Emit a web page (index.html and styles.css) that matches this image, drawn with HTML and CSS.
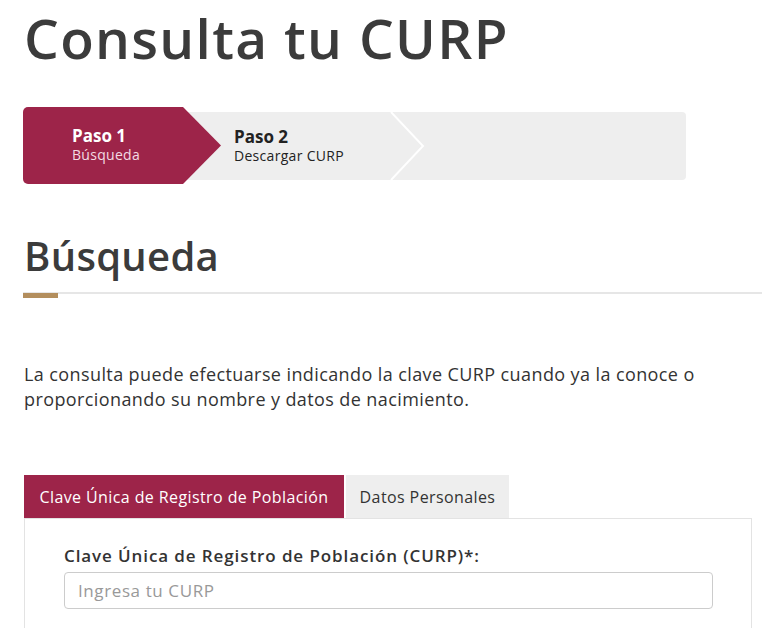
FILE: index.html
```html
<!DOCTYPE html>
<html lang="es">
<head>
<meta charset="utf-8">
<title>Consulta tu CURP</title>
<link rel="stylesheet" href="styles.css">
</head>
<body>
<main class="page">
  <h1 class="title">Consulta tu CURP</h1>

  <div class="steps">
    <div class="step step-active">
      <div class="step-name">Paso 1</div>
      <div class="step-desc">Búsqueda</div>
    </div>
    <div class="step-track">
      <div class="step step-next">
        <div class="step-name">Paso 2</div>
        <div class="step-desc">Descargar CURP</div>
      </div>
      <svg class="chevron" width="36" height="68" viewBox="0 0 36 68" aria-hidden="true">
        <polyline points="1,0 33,34 1,68" fill="none" stroke="#ffffff" stroke-width="2"/>
      </svg>
    </div>
  </div>

  <h2 class="section-title">Búsqueda</h2>
  <div class="rule"><span class="rule-accent"></span></div>

  <p class="intro">La consulta puede efectuarse indicando la clave CURP cuando ya la conoce o proporcionando su nombre y datos de nacimiento.</p>

  <div class="tabs">
    <div class="tab tab-active">Clave Única de Registro de Población</div>
    <div class="tab tab-idle">Datos Personales</div>
  </div>
  <div class="panel">
    <label class="field-label" for="curp">Clave Única de Registro de Población (CURP)*:</label>
    <input class="field-input" id="curp" type="text" placeholder="Ingresa tu CURP">
  </div>
</main>
</body>
</html>
```

FILE: styles.css
```css
* { box-sizing: border-box; }

html, body {
  margin: 0;
  padding: 0;
  background: #ffffff;
}

body {
  font-family: "Open Sans", "Liberation Sans", sans-serif;
  color: #333333;
  overflow: hidden;
}

.page {
  padding: 0 0 0 24px;
}

.title {
  margin: 0;
  font-size: 55px;
  line-height: 75px;
  font-weight: 600;
  color: #3b3b3b;
  letter-spacing: 1.3px;
}

.steps {
  display: flex;
  align-items: center;
  margin-top: 32px;
  margin-left: -1px;
  width: 663px;
  height: 77px;
}

.step-active {
  position: relative;
  z-index: 1;
  flex: 0 0 198px;
  height: 77px;
  background: #9d2449;
  border-radius: 5px 0 0 5px;
  clip-path: polygon(0 0, 160px 0, 100% 50%, 160px 100%, 0 100%);
  padding: 19px 0 0 49px;
  color: #ffffff;
}

.step-track {
  flex: 1;
  display: flex;
  align-items: center;
  height: 68px;
  margin-left: -38px;
  padding-left: 51px;
  background: #eeeeee;
  border-radius: 0 4px 4px 0;
}

.step-next {
  width: 156px;
  color: #222222;
}

.step-name {
  font-size: 17px;
  line-height: 20px;
  font-weight: 700;
}

.step-desc {
  font-size: 14px;
  line-height: 18px;
  letter-spacing: 0.3px;
}

.step-active .step-desc {
  color: #f3dbe3;
}

.chevron {
  display: block;
  flex: 0 0 36px;
}

.section-title {
  margin: 46px 0 0;
  font-size: 40px;
  line-height: 52px;
  font-weight: 600;
  color: #3b3b3b;
  letter-spacing: 0.3px;
}

.rule {
  margin-top: 10px;
  margin-left: -1px;
  height: 2px;
  background: #e6e6e6;
}

.rule-accent {
  display: block;
  width: 35px;
  height: 5px;
  background: #b38e5d;
  position: relative;
  top: 1px;
}

.intro {
  margin: 68px 0 0;
  width: 700px;
  font-size: 18px;
  line-height: 25px;
  letter-spacing: 0.4px;
  color: #333333;
}

.tabs {
  display: flex;
  gap: 2px;
  margin-top: 63px;
}

.tab {
  height: 43px;
  display: flex;
  align-items: center;
  justify-content: center;
  font-size: 16px;
  letter-spacing: 0.4px;
  background: #eeeeee;
  color: #333333;
}

.tab-active {
  width: 320px;
  background: #9d2449;
  color: #ffffff;
}

.tab-idle {
  width: 163px;
}

.panel {
  width: 728px;
  height: 140px;
  border: 1px solid #e3e3e3;
  border-bottom: none;
  padding: 26px 39px 0 39px;
}

.field-label {
  display: block;
  font-size: 17px;
  line-height: 22px;
  font-weight: 600;
  letter-spacing: 0.9px;
  color: #333333;
}

.field-input {
  display: block;
  margin-top: 5px;
  width: 649px;
  height: 37px;
  border: 1px solid #cccccc;
  border-radius: 4px;
  padding: 0 13px;
  font-family: inherit;
  font-size: 17px;
  letter-spacing: 0.6px;
  color: #333333;
  background: #ffffff;
}

.field-input::placeholder {
  color: #999999;
}
```
